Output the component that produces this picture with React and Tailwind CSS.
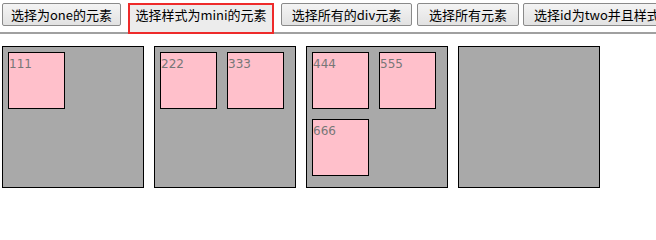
import React from "react";

const btn =
  "shrink-0 h-[23px] border border-[#8a8a8a] rounded-[2px] bg-gradient-to-b from-[#f4f4f4] to-[#e2e2e2] text-[13px] leading-[21px] text-black whitespace-nowrap flex items-start justify-center";

function Inner({ label }) {
  return (
    <div className="w-[57px] h-[57px] border border-black bg-[#ffc0cb] text-[12px] leading-[20px] text-[#777] [font-family:'DejaVu_Sans',sans-serif] pl-[0px] pt-[1px]">
      {label}
    </div>
  );
}

function Outer({ items }) {
  return (
    <div className="shrink-0 w-[142px] h-[142px] border border-black bg-[#a9a9a9] flex flex-wrap content-start gap-[10px] p-[5px]">
      {items.map((t) => (
        <Inner key={t} label={t} />
      ))}
    </div>
  );
}

export default function App() {
  return (
    <div className="w-[656px] h-[239px] overflow-hidden bg-white [font-family:'Noto_Sans_CJK_SC','Noto_Sans',sans-serif]">
      <div className="h-[34px] border-b-2 border-[#a0a0a0] flex items-start pt-[3px] pl-[2px] whitespace-nowrap">
        <button className={btn + " w-[119px]"}>选择为one的元素</button>
        <button className="shrink-0 ml-[7px] w-[146px] h-[31px] border-2 border-[#ee2b2b] bg-[#ececec] text-[13px] leading-[19px] text-black whitespace-nowrap flex items-start justify-center">
          选择样式为mini的元素
        </button>
        <button className={btn + " ml-[7px] w-[131px]"}>选择所有的div元素</button>
        <button className={btn + " ml-[5px] w-[102px]"}>选择所有元素</button>
        <button className={btn + " ml-[4px] w-[200px] justify-start pl-[10px]"}>
          选择id为two并且样式为mini的元素
        </button>
      </div>
      <div className="flex gap-[10px] pl-[2px] mt-[12px]">
        <Outer items={["111"]} />
        <Outer items={["222", "333"]} />
        <Outer items={["444", "555", "666"]} />
        <Outer items={[]} />
      </div>
    </div>
  );
}
